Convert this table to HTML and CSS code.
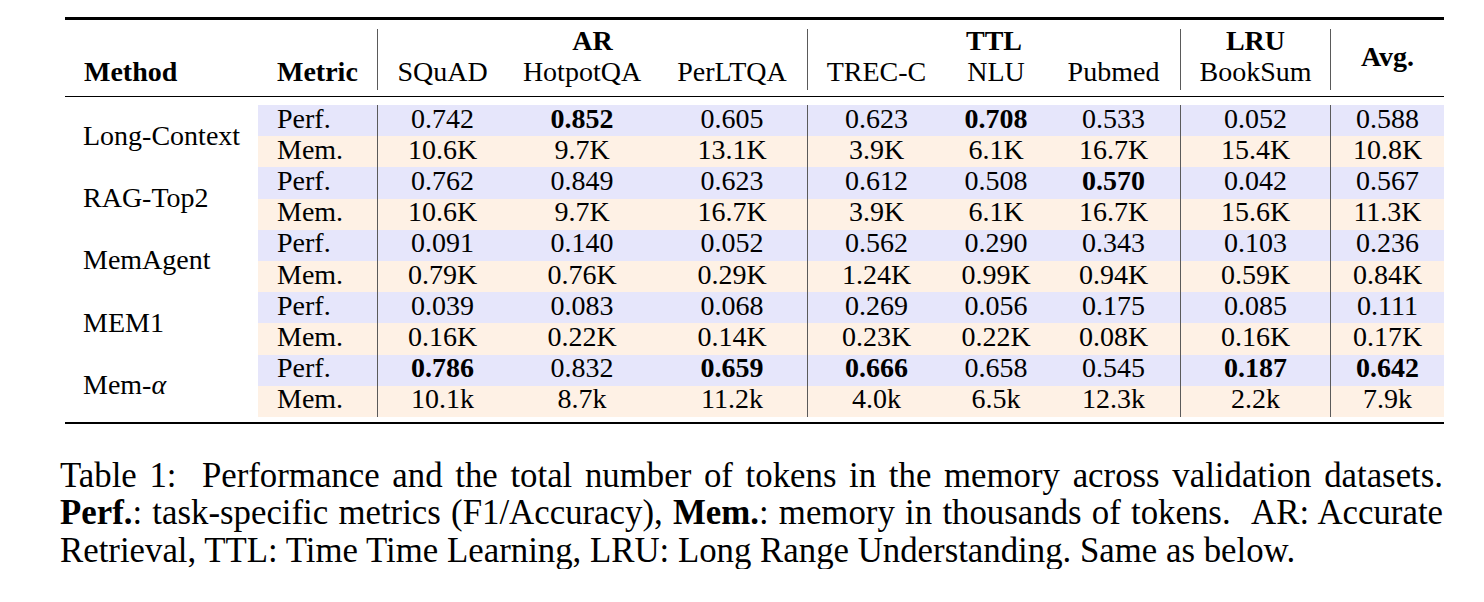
FILE: index.html
```html
<!DOCTYPE html>
<html lang="en">
<head>
<meta charset="utf-8">
<title>Table 1</title>
<link rel="stylesheet" href="styles.css">
</head>
<body>
<div class="page">
  <table class="results">
    <colgroup>
      <col class="c-method">
      <col class="c-metric">
      <col class="c-squad">
      <col class="c-hotpot">
      <col class="c-perl">
      <col class="c-trec">
      <col class="c-nlu">
      <col class="c-pub">
      <col class="c-book">
      <col class="c-avg">
    </colgroup>
    <thead>
      <tr class="sp sp-top"><td colspan="10"></td></tr>
      <tr class="h1">
        <th class="lab" rowspan="2">Method</th>
        <th class="lab" rowspan="2">Metric</th>
        <th class="grp vl" colspan="3">AR</th>
        <th class="grp vl" colspan="3">TTL</th>
        <th class="grp vl">LRU</th>
        <th class="avg vl" rowspan="2">Avg.</th>
      </tr>
      <tr class="h2">
        <td class="vl">SQuAD</td>
        <td>HotpotQA</td>
        <td>PerLTQA</td>
        <td class="vl">TREC-C</td>
        <td>NLU</td>
        <td>Pubmed</td>
        <td class="vl">BookSum</td>
      </tr>
      <tr class="sp sp-mid"><td colspan="10"></td></tr>
      <tr class="sp sp-after"><td colspan="10"></td></tr>
    </thead>
    <tbody>
      <tr class="perf">
        <td class="method" rowspan="2">Long-Context</td>
        <td class="metric">Perf.</td>
        <td class="vl">0.742</td><td><b>0.852</b></td><td>0.605</td>
        <td class="vl">0.623</td><td><b>0.708</b></td><td>0.533</td>
        <td class="vl">0.052</td><td class="vl">0.588</td>
      </tr>
      <tr class="mem">
        <td class="metric">Mem.</td>
        <td class="vl">10.6K</td><td>9.7K</td><td>13.1K</td>
        <td class="vl">3.9K</td><td>6.1K</td><td>16.7K</td>
        <td class="vl">15.4K</td><td class="vl">10.8K</td>
      </tr>
      <tr class="perf">
        <td class="method" rowspan="2">RAG-Top2</td>
        <td class="metric">Perf.</td>
        <td class="vl">0.762</td><td>0.849</td><td>0.623</td>
        <td class="vl">0.612</td><td>0.508</td><td><b>0.570</b></td>
        <td class="vl">0.042</td><td class="vl">0.567</td>
      </tr>
      <tr class="mem">
        <td class="metric">Mem.</td>
        <td class="vl">10.6K</td><td>9.7K</td><td>16.7K</td>
        <td class="vl">3.9K</td><td>6.1K</td><td>16.7K</td>
        <td class="vl">15.6K</td><td class="vl">11.3K</td>
      </tr>
      <tr class="perf">
        <td class="method" rowspan="2">MemAgent</td>
        <td class="metric">Perf.</td>
        <td class="vl">0.091</td><td>0.140</td><td>0.052</td>
        <td class="vl">0.562</td><td>0.290</td><td>0.343</td>
        <td class="vl">0.103</td><td class="vl">0.236</td>
      </tr>
      <tr class="mem">
        <td class="metric">Mem.</td>
        <td class="vl">0.79K</td><td>0.76K</td><td>0.29K</td>
        <td class="vl">1.24K</td><td>0.99K</td><td>0.94K</td>
        <td class="vl">0.59K</td><td class="vl">0.84K</td>
      </tr>
      <tr class="perf">
        <td class="method" rowspan="2">MEM1</td>
        <td class="metric">Perf.</td>
        <td class="vl">0.039</td><td>0.083</td><td>0.068</td>
        <td class="vl">0.269</td><td>0.056</td><td>0.175</td>
        <td class="vl">0.085</td><td class="vl">0.111</td>
      </tr>
      <tr class="mem">
        <td class="metric">Mem.</td>
        <td class="vl">0.16K</td><td>0.22K</td><td>0.14K</td>
        <td class="vl">0.23K</td><td>0.22K</td><td>0.08K</td>
        <td class="vl">0.16K</td><td class="vl">0.17K</td>
      </tr>
      <tr class="perf">
        <td class="method" rowspan="2">Mem-<i class="alpha">α</i></td>
        <td class="metric">Perf.</td>
        <td class="vl"><b>0.786</b></td><td>0.832</td><td><b>0.659</b></td>
        <td class="vl"><b>0.666</b></td><td>0.658</td><td>0.545</td>
        <td class="vl"><b>0.187</b></td><td class="vl"><b>0.642</b></td>
      </tr>
      <tr class="mem">
        <td class="metric">Mem.</td>
        <td class="vl">10.1k</td><td>8.7k</td><td>11.2k</td>
        <td class="vl">4.0k</td><td>6.5k</td><td>12.3k</td>
        <td class="vl">2.2k</td><td class="vl">7.9k</td>
      </tr>
      <tr class="sp sp-bottom"><td colspan="10"></td></tr>
    </tbody>
  </table>

  <div class="caption">
    <div class="cap-line">Table 1: &nbsp;Performance and the total number of tokens in the memory across validation datasets.</div>
    <div class="cap-line"><b>Perf.</b>: task-specific metrics (F1/Accuracy), <b>Mem.</b>: memory in thousands of tokens. &nbsp;AR: Accurate</div>
    <div class="cap-line last">Retrieval, TTL: Time Time Learning, LRU: Long Range Understanding. Same as below.</div>
  </div>
</div>
</body>
</html>
```

FILE: styles.css
```css
html, body {
  margin: 0;
  padding: 0;
  background: #ffffff;
}

body {
  font-family: "Liberation Serif", "DejaVu Serif", serif;
  color: #000000;
}

.page {
  padding: 17px 0 0 0;
}

.results {
  margin-left: 65px;
  width: 1379px;
  table-layout: fixed;
  border-collapse: separate;
  border-spacing: 0;
  border-top: 3px solid #000;
  border-bottom: 2px solid #000;
  font-family: "Liberation Serif", "DejaVu Serif", serif;
  font-size: 28px;
}

.c-method { width: 193px; }
.c-metric { width: 119px; }
.c-squad  { width: 130px; }
.c-hotpot { width: 150px; }
.c-perl   { width: 150px; }
.c-trec   { width: 138px; }
.c-nlu    { width: 102px; }
.c-pub    { width: 133px; }
.c-book   { width: 150px; }
.c-avg    { width: 114px; }

.results td,
.results th {
  padding: 0 10px;
  text-align: center;
  white-space: nowrap;
  font-weight: normal;
}

.results .vl {
  border-left: 1px solid #5a5a5a;
}

/* spacer rows that hold the booktabs-like rules */
.sp td {
  padding: 0;
  font-size: 0;
  line-height: 0;
}
.sp-top td { height: 9px; }
.sp-mid td { height: 6px; border-bottom: 1px solid #000; }
.sp-after td { height: 8px; }
.sp-bottom td { height: 5px; }

/* header */
.h1 { height: 30px; }
.h2 { height: 31px; }

.results .grp {
  font-weight: bold;
  vertical-align: top;
  line-height: 24px;
}
.h2 td {
  vertical-align: bottom;
  line-height: 26px;
  padding-bottom: 5px;
}
.results .lab {
  font-weight: bold;
  text-align: left;
  vertical-align: bottom;
  padding-left: 19px;
  line-height: 36px;
}
.results .avg {
  font-weight: bold;
  vertical-align: middle;
  line-height: 28px;
  padding-bottom: 5px;
}

/* body */
.perf,
.mem {
  height: 31.2px;
}
.perf td,
.mem td {
  line-height: 26px;
  padding-bottom: 4px;
  vertical-align: middle;
}
.perf td { background: #e6e6fb; }
.mem td { background: #fef1e5; }

.results td.method {
  background: #ffffff;
  text-align: left;
  padding-left: 18px;
  padding-bottom: 1px;
}
.results td.metric {
  text-align: left;
  padding-left: 19px;
}
.alpha {
  font-style: italic;
}

/* caption */
.caption {
  margin: 33px 0 0 60px;
  width: 1383px;
  font-family: "Liberation Serif", "DejaVu Serif", serif;
  font-size: 34.8px;
  line-height: 37.5px;
}
.cap-line {
  text-align: justify;
  text-align-last: justify;
  white-space: nowrap;
}
.cap-line.last {
  text-align: left;
  text-align-last: left;
}
```
